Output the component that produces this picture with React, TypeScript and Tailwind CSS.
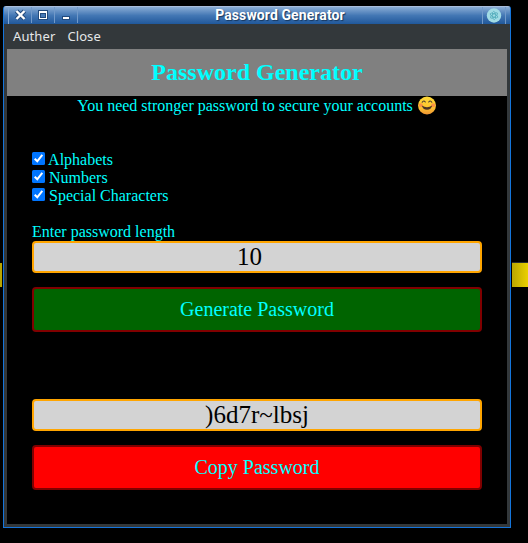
import React from "react";

function TitleBar() {
  return (
    <header className="relative flex h-[18px] shrink-0 items-center justify-between rounded-t-[2px] border-t border-[#a9bddc] bg-gradient-to-b from-[#8aadd5] via-[#4377b4] to-[#20589b]">
      <div className="flex h-full items-center">
        <div className="h-full w-[5px] border-r border-[#82a8d4]" />
        <svg width="69" height="17" viewBox="0 1 69 17" shapeRendering="crispEdges">
          <path d="M22.500 0V17M45.500 0V17M68.500 0V17" stroke="#7199c9" />
          <path d="M7.500 5L15.500 13M15.500 5L7.500 13" stroke="#234b7d" strokeWidth="4.500" shapeRendering="auto" />
          <path d="M7.500 5L15.500 13M15.500 5L7.500 13" stroke="#fff" strokeWidth="2.400" shapeRendering="auto" />
          <path d="M29 4H39V14H29Z" fill="#234b7d" />
          <path d="M30 5H38V13H30Z" fill="#fff" />
          <path d="M31 7H37V12H31Z" fill="#234b7d" />
          <path d="M32 8H36V11H32Z" fill="#477ab6" />
          <path d="M53 10H61V14H53Z" fill="#234b7d" />
          <path d="M54 11H60V13H54Z" fill="#fff" />
        </svg>
      </div>
      <h1 className="absolute inset-x-0 -top-px pl-[46px] text-center font-[Roboto,sans-serif] text-[14px] leading-[18px] font-bold tracking-[0.1px] text-white [text-shadow:1px_1px_1px_#16365d]">
        Password Generator
      </h1>
      <div className="mr-[4px] flex h-full w-[24px] items-center justify-center border-x border-[#7199c9]">
        <svg width="16" height="16" viewBox="0 0 16 16">
          <circle cx="8" cy="7.500" r="7.200" fill="#a2dce5" />
          <g fill="none" stroke="#55aebd" strokeWidth=".8">
            <ellipse cx="8" cy="7.500" rx="4.200" ry="1.600" transform="rotate(25 8 7.500)" />
            <ellipse cx="8" cy="7.500" rx="4.200" ry="1.600" transform="rotate(85 8 7.500)" />
            <ellipse cx="8" cy="7.500" rx="4.200" ry="1.600" transform="rotate(145 8 7.500)" />
          </g>
        </svg>
      </div>
    </header>
  );
}

function Option({ label }: { label: string }) {
  return (
    <label className="flex h-[18px] items-start">
      <svg className="mt-[2px]" width="13" height="13" viewBox="0 0 13 13">
        <rect width="13" height="13" rx="1.500" fill="#0075ff" />
        <path d="M2.700 6.700L5.300 9.300L10.300 2.800" fill="none" stroke="#fff" strokeWidth="2" />
      </svg>
      <span className="leading-[20px] whitespace-pre">{` ${label}`}</span>
    </label>
  );
}

function Smile() {
  return (
    <svg width="20" height="19" viewBox="0 0 20 19">
      <defs>
        <linearGradient id="face" x1="0" y1="0" x2="0" y2="1">
          <stop stopColor="#ffda38" />
          <stop offset=".6" stopColor="#fcc52f" />
          <stop offset="1" stopColor="#f19534" />
        </linearGradient>
      </defs>
      <circle cx="10" cy="9.500" r="9" fill="url(#face)" />
      <circle cx="3.800" cy="9.300" r="2" fill="#fa7a4e" opacity=".7" />
      <circle cx="16.200" cy="9.300" r="2" fill="#fa7a4e" opacity=".7" />
      <path d="M5.200 6.200Q6.700 3.800 8.300 6M11.700 6Q13.300 3.800 14.800 6.200" fill="none" stroke="#493c34" strokeWidth="1.100" strokeLinecap="round" />
      <path d="M4.800 9.500Q10 13 15.200 9.500Q14.200 13.700 10 13.700Q5.800 13.700 4.800 9.500" fill="#4a3426" />
    </svg>
  );
}

const field = "h-8 w-full rounded-[4px] border-2 border-[#ffa500] bg-[#d3d3d3] py-0 pl-0 text-center text-[25px] leading-[28px] text-black outline-none";
const button = "mt-[14px] block h-[45px] w-full rounded-[4px] border-2 border-[#800000] pb-[2px] text-[20px]";

export default function App() {
  return (
    <div className="relative h-[543px] w-[528px] overflow-hidden bg-black">
      <div className="absolute top-[263px] left-0 h-6 w-[2px] bg-[#b9a600]" />
      <div className="absolute top-[262px] right-0 h-[25px] w-4 border-t border-[#292d30] bg-gradient-to-r from-[#b9a600] to-[#ebd000]" />
      <div className="absolute top-[6px] left-[3px] flex h-[522px] w-[508px] flex-col rounded-t-[3px] border border-t-0 border-[#1475dc] bg-[#33383b]">
        <TitleBar />
        <nav className="flex h-[25px] shrink-0 items-center gap-[12px] pt-px pl-[9px] font-['Noto_Sans',sans-serif] text-[13px] tracking-[0.1px] text-[#e5e7e8]">
          <span>Auther</span>
          <span>Close</span>
        </nav>
        <main className="mx-[3px] h-[475px] bg-black font-['Liberation_Serif',serif] text-[16px] text-[#00ffff]">
          <h2 className="flex h-[47px] items-center justify-center bg-[#808080] pb-[2px] text-[24px] font-bold">Password Generator</h2>
          <p className="flex h-[18px] items-start justify-center gap-1">
            <span className="leading-[20px]">You need stronger password to secure your accounts</span>
            <Smile />
          </p>
          <div className="px-[25px] pt-[36px]">
            <Option label="Alphabets" />
            <Option label="Numbers" />
            <Option label="Special Characters" />
            <label htmlFor="length" className="mt-[18px] block h-[19px] leading-[19px]">Enter password length</label>
            <input id="length" className={`${field} pr-[15px]`} defaultValue="10" />
            <button className={`${button} bg-[#006400]`}>Generate Password</button>
            <input aria-label="Generated password" className={`${field} mt-[67px] pr-0`} defaultValue=")6d7r~lbsj" />
            <button className={`${button} bg-[#ff0000]`}>Copy Password</button>
          </div>
        </main>
      </div>
    </div>
  );
}
